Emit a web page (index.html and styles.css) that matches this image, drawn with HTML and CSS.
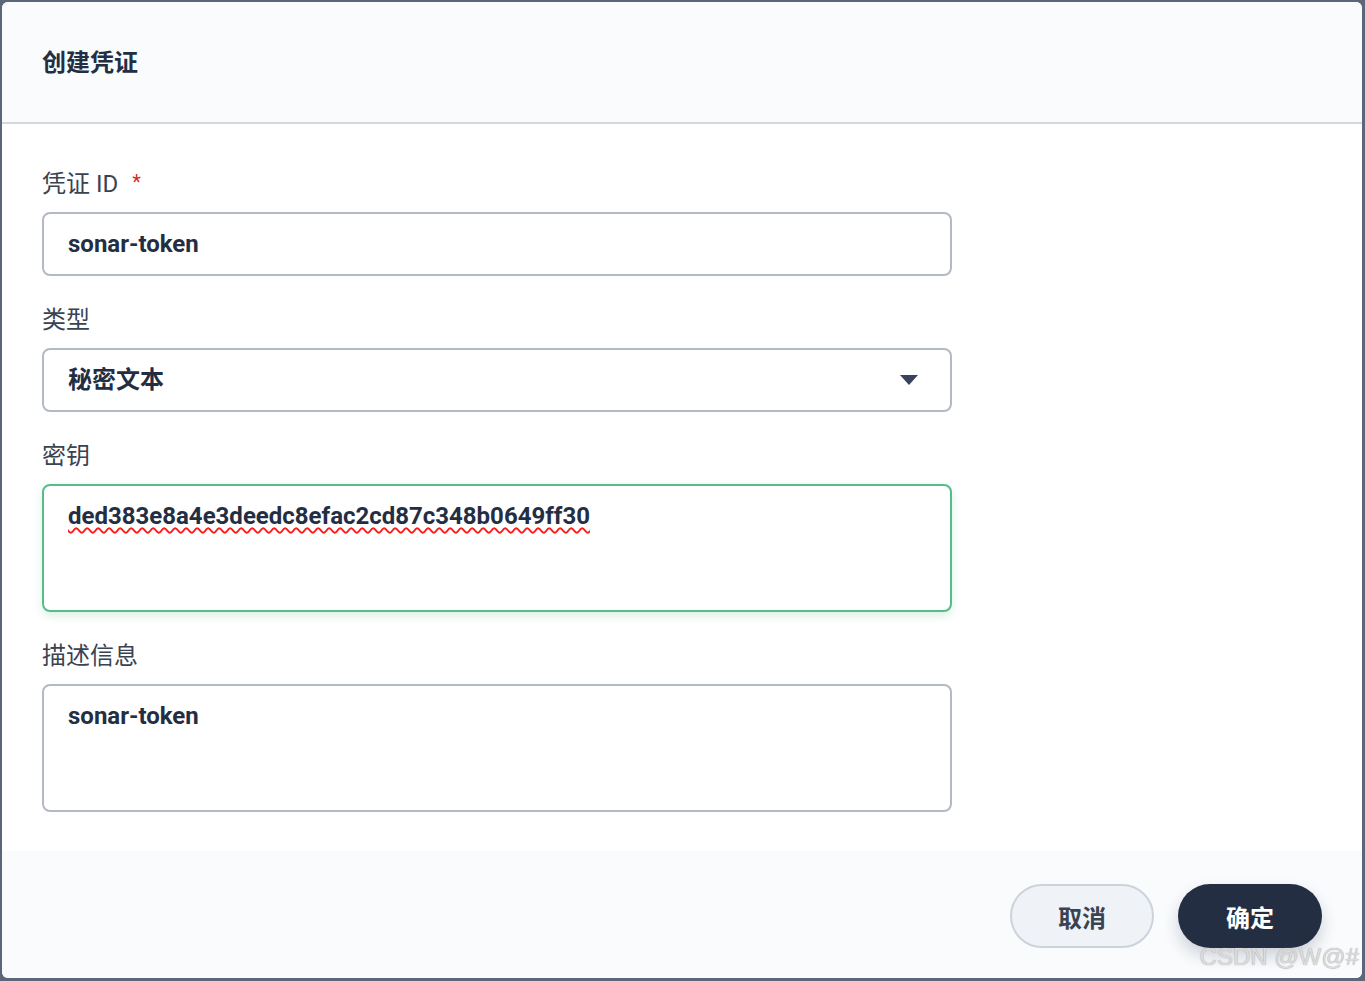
FILE: index.html
```html
<!DOCTYPE html>
<html lang="zh">
<head>
<meta charset="utf-8">
<title>创建凭证</title>
<link rel="stylesheet" href="styles.css">
</head>
<body>
<div class="modal">
  <div class="modal-header"><h2 class="title">创建凭证</h2></div>
  <div class="modal-body">
    <div class="field">
      <div class="label">凭证 ID<span class="req">*</span></div>
      <div class="input"><span class="value">sonar-token</span></div>
    </div>
    <div class="field">
      <div class="label">类型</div>
      <div class="input select"><span class="value">秘密文本</span>
        <svg class="arrow" width="18" height="10" viewBox="0 0 18 10"><path d="M0 0 L18 0 L9 10 Z" fill="#36435a"/></svg>
      </div>
    </div>
    <div class="field">
      <div class="label">密钥</div>
      <div class="input textarea focused"><span class="value spell">ded383e8a4e3deedc8efac2cd87c348b0649ff30</span></div>
    </div>
    <div class="field last">
      <div class="label">描述信息</div>
      <div class="input textarea"><span class="value">sonar-token</span></div>
    </div>
  </div>
  <div class="modal-footer">
    <button class="btn btn-cancel">取消</button>
    <button class="btn btn-ok">确定</button>
  </div>
  <div class="watermark">CSDN @W@#</div>
</div>
</body>
</html>
```
FILE: styles.css
```css
html, body {
  margin: 0;
  padding: 0;
  height: 100%;
}
body {
  background: #5d6578;
  font-family: Roboto, "Noto Sans CJK SC", sans-serif;
  padding: 2px 3px 3px 2px;
  box-sizing: border-box;
}
.modal {
  position: relative;
  height: 976px;
  background: #ffffff;
  border-radius: 6px;
  overflow: hidden;
  display: flex;
  flex-direction: column;
}
.modal-header {
  background: #f9fbfd;
  border-bottom: 2px solid #d3d8df;
  display: flex;
  align-items: center;
  padding-left: 40px;
  box-sizing: border-box;
  height: 122px;
  flex-shrink: 0;
}
.title {
  margin: 0;
  font-size: 24px;
  font-weight: 700;
  color: #242e42;
  line-height: 32px;
  padding-top: 2px;
}
.modal-body {
  padding: 44px 40px 39px 40px;
  display: flex;
  flex-direction: column;
  gap: 28px;
  flex-shrink: 0;
}
.field {
  width: 910px;
  display: flex;
  flex-direction: column;
}
.label {
  font-size: 24px;
  line-height: 32px;
  height: 32px;
  color: #3a4352;
  margin-bottom: 12px;
  white-space: nowrap;
}
.req {
  color: #d52b1e;
  font-size: 20px;
  margin-left: 14px;
  line-height: 0;
  vertical-align: 3px;
}
.input {
  height: 64px;
  border: 2px solid #b3bac5;
  border-radius: 8px;
  box-sizing: border-box;
  padding: 0 24px;
  display: flex;
  align-items: center;
  background: #fff;
}
.value {
  font-size: 24px;
  font-weight: 700;
  color: #242e42;
  line-height: 32px;
}
.select {
  justify-content: space-between;
  padding-right: 32px;
}
.arrow {
  display: block;
}
.textarea {
  height: 128px;
  align-items: flex-start;
  padding-top: 14px;
}
.focused {
  border-color: #55bc8a;
  box-shadow: 0 4px 10px rgba(85, 188, 138, 0.22);
}
.spell {
  text-decoration: underline wavy #ff1a1a;
  text-decoration-thickness: 2px;
  text-underline-offset: 3px;
}
.modal-footer {
  flex: 1;
  background: #f9fbfd;
  display: flex;
  justify-content: flex-end;
  align-items: flex-start;
  gap: 24px;
  padding: 33px 40px 0 0;
}
.btn {
  width: 144px;
  height: 64px;
  border-radius: 32px;
  font-family: Roboto, "Noto Sans CJK SC", sans-serif;
  font-size: 24px;
  font-weight: 700;
  cursor: pointer;
}
.btn-cancel {
  background: #eff3f7;
  border: 2px solid #ccd3db;
  color: #3a4352;
}
.btn-ok {
  background: #242e42;
  border: none;
  color: #ffffff;
  box-shadow: 0 8px 16px rgba(36, 46, 66, 0.2);
}
.watermark {
  position: absolute;
  right: 3px;
  bottom: 7px;
  font-family: "Liberation Sans", Arial, sans-serif;
  font-size: 24px;
  color: #dcdcdc;
  text-shadow: 0 0 1px #8f8f8f;
}
```
